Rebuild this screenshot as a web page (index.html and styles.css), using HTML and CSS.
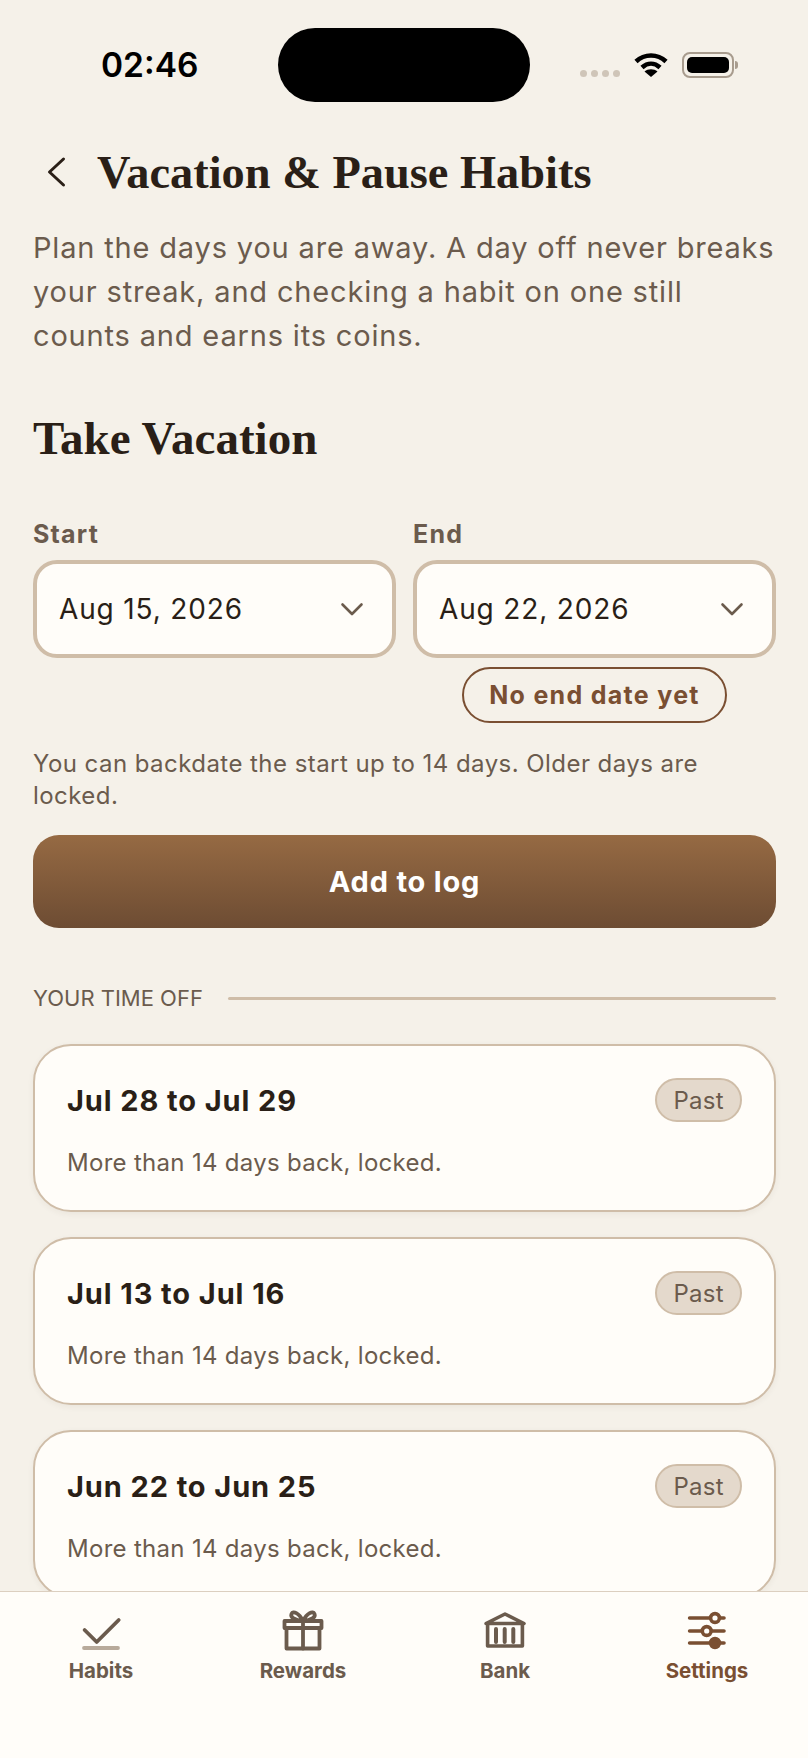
FILE: index.html
```html
<!DOCTYPE html>
<html lang="en">
<head>
    <meta charset="UTF-8">
    <meta name="viewport" content="width=device-width, initial-scale=1.0">
    <title>Vacation &amp; Pause Habits</title>
    <link rel="stylesheet" href="styles.css">
</head>
<body>
    <div class="screen">
        <div class="status-bar">
            <span class="status-time">02:46</span>
            <div class="island"></div>
            <div class="status-icons">
                <div class="signal"><i></i><i></i><i></i><i></i></div>
                <svg class="wifi" width="34" height="24" viewBox="0 0 34 24">
                    <path d="M2 8.500C10.500 .5 23.500 .5 32 8.500" fill="none" stroke="#000" stroke-width="4.600"/>
                    <path d="M8 14.500C13.500 9.500 20.500 9.500 26 14.500" fill="none" stroke="#000" stroke-width="4.600"/>
                    <path d="M17 24L10.500 18.500C14 15.500 20 15.500 23.500 18.500Z" fill="#000"/>
                </svg>
                <div class="battery"><div class="battery-fill"></div></div>
                <div class="battery-cap"></div>
            </div>
        </div>

        <main class="content">
            <header class="page-head">
                <svg class="back" width="24" height="36" viewBox="0 0 24 36">
                    <path d="M19.500 5L5.500 18L19.500 31" fill="none" stroke="#2a1f17" stroke-width="3" stroke-linecap="round" stroke-linejoin="round"/>
                </svg>
                <h1>Vacation &amp; Pause Habits</h1>
            </header>
            <p class="intro">Plan the days you are away. A day off never breaks your streak, and checking a habit on one still counts and earns its coins.</p>

            <h2>Take Vacation</h2>
            <div class="date-row">
                <div class="date-col">
                    <label>Start</label>
                    <div class="date-field">
                        <span>Aug 15, 2026</span>
                        <svg width="24" height="16" viewBox="0 0 24 16"><path d="M2.500 3.500L12 13L21.500 3.500" fill="none" stroke="#6b5b4d" stroke-width="2.600" stroke-linecap="round" stroke-linejoin="round"/></svg>
                    </div>
                </div>
                <div class="date-col">
                    <label>End</label>
                    <div class="date-field">
                        <span>Aug 22, 2026</span>
                        <svg width="24" height="16" viewBox="0 0 24 16"><path d="M2.500 3.500L12 13L21.500 3.500" fill="none" stroke="#6b5b4d" stroke-width="2.600" stroke-linecap="round" stroke-linejoin="round"/></svg>
                    </div>
                    <button class="no-end">No end date yet</button>
                </div>
            </div>
            <p class="note">You can backdate the start up to 14 days. Older days are locked.</p>
            <button class="add-btn">Add to log</button>

            <div class="divider">
                <span>YOUR TIME OFF</span>
                <div class="divider-line"></div>
            </div>

            <div class="card">
                <div class="card-top"><strong>Jul 28 to Jul 29</strong><span class="tag">Past</span></div>
                <p>More than 14 days back, locked.</p>
            </div>
            <div class="card">
                <div class="card-top"><strong>Jul 13 to Jul 16</strong><span class="tag">Past</span></div>
                <p>More than 14 days back, locked.</p>
            </div>
            <div class="card">
                <div class="card-top"><strong>Jun 22 to Jun 25</strong><span class="tag">Past</span></div>
                <p>More than 14 days back, locked.</p>
            </div>
        </main>

        <nav class="tabs">
            <div class="tab">
                <svg width="44" height="44" viewBox="0 0 44 44">
                    <path d="M5.600 22L17.700 34L39.700 12" fill="none" stroke="#6b5b4d" stroke-width="3.800" stroke-linecap="round" stroke-linejoin="round"/>
                    <path d="M5 40H39" stroke="#b8aa9b" stroke-width="3.800" stroke-linecap="round"/>
                </svg>
                <span>Habits</span>
            </div>
            <div class="tab">
                <svg width="44" height="44" viewBox="0 0 44 44" fill="none" stroke="#6b5b4d" stroke-width="3.800" stroke-linejoin="round" stroke-linecap="round">
                    <path d="M3.500 13H40.500V20H3.500Z"/>
                    <path d="M5.500 20V40.500H38.500V20"/>
                    <path d="M22 13V40.500"/>
                    <path d="M22 13C18 5 12 2.500 10.500 6C9 9.500 14 12 22 13C30 12 35 9.500 33.500 6C32 2.500 26 5 22 13Z"/>
                </svg>
                <span>Rewards</span>
            </div>
            <div class="tab">
                <svg width="44" height="44" viewBox="0 0 44 44" fill="none" stroke="#6b5b4d" stroke-width="3.600" stroke-linejoin="round" stroke-linecap="round">
                    <path d="M3 15.500L22 6L41 15.500Z"/>
                    <path d="M4.600 15.500V38H39.400V15.500"/>
                    <path d="M13 21V34M21.700 21V34M30.300 21V34" stroke-width="4"/>
                </svg>
                <span>Bank</span>
            </div>
            <div class="tab tab-active">
                <svg width="44" height="44" viewBox="0 0 44 44" fill="none" stroke="#7a4f32" stroke-width="3.600" stroke-linecap="round">
                    <path d="M4.600 10H39M4.600 23H39M4.600 35H39"/>
                    <circle cx="30" cy="10" r="4.400" fill="#fffdf9"/>
                    <circle cx="21.700" cy="23" r="4.400" fill="#fffdf9"/>
                    <circle cx="30" cy="35" r="4.400" fill="#7a4f32"/>
                </svg>
                <span>Settings</span>
            </div>
        </nav>
    </div>
</body>
</html>
```

FILE: styles.css
```css
body {
    font-family: 'Inter', sans-serif;
    margin: 0;
    padding: 0;
    background-color: #f5f1e9;
    color: #2a1f17;
}
.screen {
    display: flex;
    flex-direction: column;
    width: 808px;
    height: 1758px;
    overflow: hidden;
}
.status-bar {
    display: flex;
    align-items: center;
    flex-shrink: 0;
    height: 74px;
    margin-top: 28px;
    padding-left: 101px;
}
.status-time {
    width: 177px;
    font-family: 'Inter', sans-serif;
    font-size: 33.500px;
    font-weight: 600;
    color: #000;
}
.island {
    width: 252px;
    height: 74px;
    border-radius: 37px;
    background: #000;
}
.status-icons {
    display: flex;
    align-items: center;
    margin-left: 50px;
}
.signal {
    display: flex;
    gap: 4px;
    margin-top: 16px;
    margin-right: 14px;
}
.signal i {
    width: 7px;
    height: 7px;
    border-radius: 50%;
    background: #cfc5b8;
}
.battery {
    width: 52px;
    height: 26px;
    margin-left: 14px;
    padding: 3px;
    box-sizing: border-box;
    border: 2px solid #a89c8e;
    border-radius: 8px;
}
.battery-fill {
    width: 100%;
    height: 100%;
    background: #000;
    border-radius: 5px;
}
.battery-cap {
    width: 3px;
    height: 8px;
    margin-left: 1px;
    background: #a89c8e;
    border-radius: 0 3px 3px 0;
}
.content {
    flex: 1;
    min-height: 0;
    overflow: hidden;
    padding: 42px 32px 0 33px;
}
.page-head {
    display: flex;
    align-items: center;
    height: 56px;
}
.back {
    margin-left: 11px;
    margin-right: 29px;
}
h1 {
    margin: 0;
    font-family: 'Liberation Serif', serif;
    font-size: 46.400px;
    font-weight: 700;
    color: #2a1f17;
}
.intro {
    margin: 26px 0 0;
    font-size: 29px;
    line-height: 44px;
    letter-spacing: 0.830px;
    color: #6b5b4d;
}
h2 {
    margin: 52px 0 0;
    font-family: 'Liberation Serif', serif;
    font-size: 47px;
    line-height: 56px;
    font-weight: 700;
    color: #2a1f17;
}
.date-row {
    display: flex;
    gap: 17px;
    margin-top: 53px;
}
.date-col {
    flex: 1;
    display: flex;
    flex-direction: column;
}
label {
    font-size: 25px;
    line-height: 30px;
    letter-spacing: 1.200px;
    font-weight: 700;
    color: #6b5b4d;
    margin-bottom: 11px;
}
.date-field {
    display: flex;
    justify-content: space-between;
    align-items: center;
    height: 98px;
    box-sizing: border-box;
    padding: 0 28px 0 22px;
    background: #fffdf9;
    border: 4px solid #cfbda8;
    border-radius: 24px;
    font-size: 28px;
    letter-spacing: 0.850px;
}
.no-end {
    align-self: center;
    margin-top: 9px;
    height: 56px;
    padding: 0 25px;
    background: transparent;
    border: 2px solid #7a4f32;
    border-radius: 28px;
    font-family: 'Inter', sans-serif;
    font-size: 25px;
    letter-spacing: 1.300px;
    font-weight: 700;
    color: #7a4f32;
}
.note {
    margin: 25px 0 0;
    font-size: 24px;
    line-height: 32px;
    letter-spacing: 0.450px;
    color: #6b5b4d;
}
.add-btn {
    display: block;
    width: 100%;
    height: 93px;
    margin-top: 23px;
    background: linear-gradient(#966a43, #6d4c33);
    border: none;
    border-radius: 26px;
    font-family: 'Inter', sans-serif;
    font-size: 29px;
    letter-spacing: 0.800px;
    font-weight: 700;
    color: #fff;
}
.divider {
    display: flex;
    align-items: center;
    gap: 25px;
    margin-top: 56px;
    height: 28px;
    font-size: 22px;
    color: #6b5b4d;
}
.divider-line {
    flex: 1;
    height: 3px;
    background: #cfbda8;
    border-radius: 2px;
}
.card {
    height: 168px;
    box-sizing: border-box;
    margin-top: 25px;
    padding: 32px 32px 0;
    background: #fffdf9;
    border: 2px solid #cfbda8;
    border-radius: 38px;
    box-shadow: 0 2px 6px rgba(70, 50, 30, 0.06);
}
.divider + .card {
    margin-top: 32px;
}
.card-top {
    display: flex;
    justify-content: space-between;
    align-items: center;
}
.card-top strong {
    font-size: 29px;
    letter-spacing: 0.900px;
    color: #2a1f17;
}
.tag {
    height: 44px;
    box-sizing: border-box;
    padding: 0 16px;
    display: flex;
    align-items: center;
    background: #e4d9cc;
    border: 2px solid #cfbda8;
    border-radius: 22px;
    font-size: 24px;
    letter-spacing: 0.300px;
    color: #6b5b4d;
}
.card p {
    margin: 25px 0 0;
    font-size: 24px;
    line-height: 32px;
    letter-spacing: 0.300px;
    color: #6b5b4d;
}
.tabs {
    display: grid;
    grid-template-columns: repeat(4, 202px);
    flex-shrink: 0;
    height: 167px;
    box-sizing: border-box;
    padding-top: 16px;
    background: #fffdf9;
    border-top: 1px solid #dccfc0;
}
.tab {
    display: flex;
    flex-direction: column;
    align-items: center;
    font-size: 20.500px;
    font-weight: 700;
    color: #6b5b4d;
}
.tab span {
    margin-top: 5px;
    line-height: 28px;
}
.tab-active {
    color: #7a4f32;
}
```
